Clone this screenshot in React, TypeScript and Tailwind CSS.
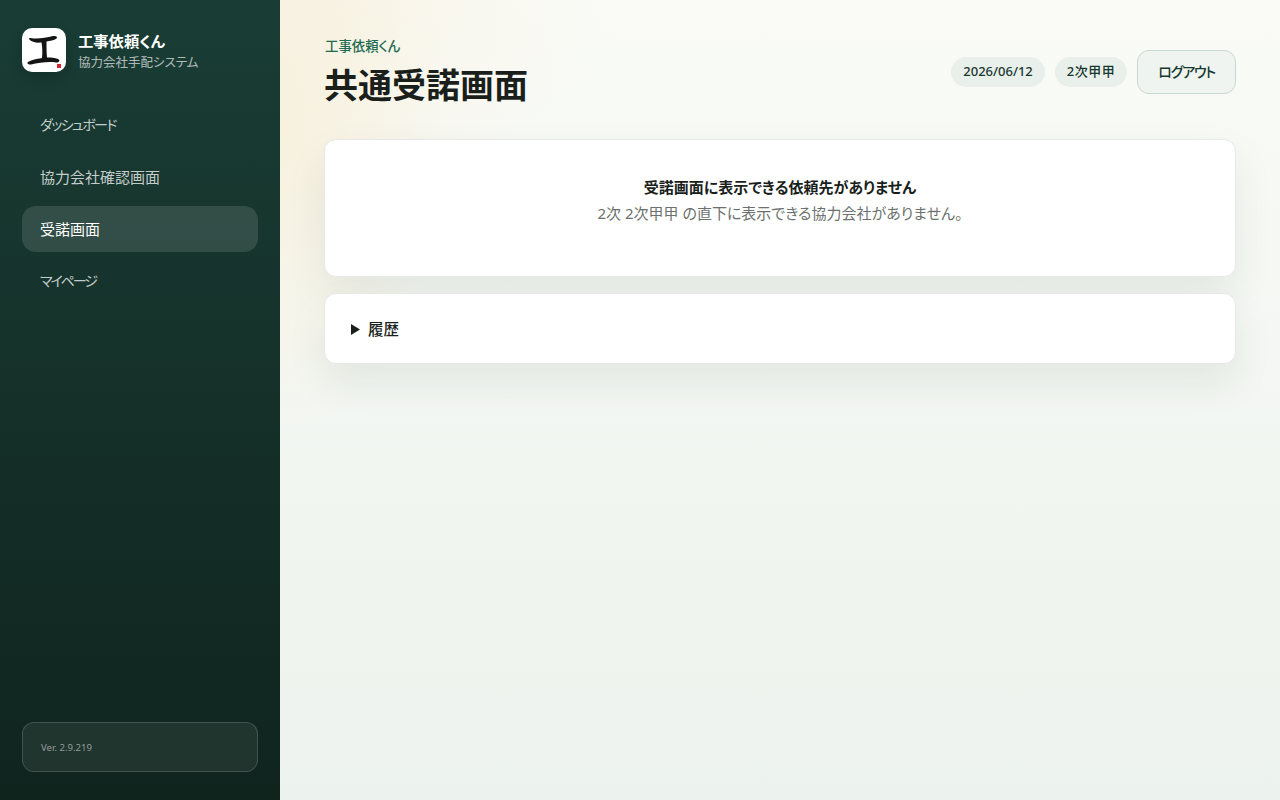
const navItems = [
	{ label: 'ダッシュボード', textClass: 'pb-[1px] text-[14px] tracking-[-1.600px]' },
	{ label: '協力会社確認画面', textClass: 'text-[15px]' },
	{ label: '受諾画面', textClass: 'text-[15px]' },
	{ label: 'マイページ', textClass: 'pb-[1px] text-[14px] tracking-[-2.100px]' },
]

const Logo = () => (
	<div className="flex h-11 w-11 shrink-0 items-center justify-center rounded-[10px] bg-white shadow-[0_6px_14px_rgba(0,0,0,0.18)]">
		<svg width="44" height="44" viewBox="0 0 44 44">
			<path d="M7 11 C7 9.500 9 10 12 10.500 C17 11 25 9.500 31 8 C34 7.500 36 9 34.500 10.500 C32 12.500 28 13 24.500 13.500 C24.500 19 24.500 24 25 29.500 C29 29.500 33 29.500 36 31 C38.500 32.500 37.500 34.500 34 34.500 C27 33.500 17 34.500 9 36.500 C6.500 37 4.500 35.500 6 34 C8 32.500 14 31 20 30 C20.500 25 20.500 20 19.500 14.500 C15 15 9.500 14.500 7 11 Z" fill="#141414" />
			<rect x="35" y="36" width="4" height="4" fill="#d8232f" />
		</svg>
	</div>
)

export default function App() {
	return (
		<div className="flex h-[800px] w-[1280px] overflow-hidden font-['Noto_Sans','Noto_Sans_CJK_JP',sans-serif] text-[#1a1f1c] [font-feature-settings:'palt']">
			<aside className="flex w-[280px] shrink-0 flex-col bg-gradient-to-b from-[#193d35] to-[#10241e] px-[22px] pt-[28px] pb-[28px]">
				<div className="flex items-center gap-[12px]">
					<Logo />
					<div className="pt-[2px]">
						<div className="text-[15.300px] leading-[22px] font-bold text-white">工事依頼くん</div>
						<div className="mt-[1px] text-[12.500px] leading-[19px] text-white/65">協力会社手配システム</div>
					</div>
				</div>
				<nav className="mt-[30px] flex flex-col gap-[6px]">
					{navItems.map((item, index) => (
						<div
							key={item.label}
							className={`flex h-[46px] items-center rounded-[14px] px-[18px] ${item.textClass} ${index === 2 ? 'bg-white/[0.12] text-white' : 'text-white/75'}`}
						>
							{item.label}
						</div>
					))}
				</nav>
				<div className="mt-auto flex h-[50px] items-center rounded-[12px] border border-white/15 bg-white/[0.07] px-[18px] pt-[3px] text-[9.600px] text-white/50">
					Ver. 2.9.219
				</div>
			</aside>
			<main className="flex-1 bg-[radial-gradient(ellipse_170px_300px_at_0%_130px,rgba(247,240,220,0.9),rgba(247,240,220,0)),radial-gradient(ellipse_340px_220px_at_0%_0%,rgba(248,243,228,0.9),rgba(248,243,228,0)),linear-gradient(180deg,#fafbf7_0%,#ecf2ed_100%)] px-[44px] pt-[36px]">
				<header className="flex items-center justify-between">
					<div>
						<div className="pl-[1px] text-[13.400px] leading-[20px] font-medium text-[#1f6b52]">工事依頼くん</div>
						<h1 className="mt-[6px] text-[34px] leading-[46px] font-bold">共通受諾画面</h1>
					</div>
					<div className="flex items-center gap-[10px]">
						<span className="flex h-[30px] items-center rounded-full bg-[#e9efea] px-[12px] text-[13px] font-medium text-[#17382f]">2026/06/12</span>
						<span className="flex h-[30px] items-center rounded-full bg-[#e9efea] px-[12px] text-[13px] font-medium tracking-[0.5px] text-[#17382f]">2次甲甲</span>
						<button className="h-[44px] rounded-[12px] border border-[#c9d8d0] bg-[#eff4f0] px-[20px] pb-[2px] text-[14px] font-medium tracking-[-1.200px] text-[#17382f]">ログアウト</button>
					</div>
				</header>
				<section className="mt-[31px] flex h-[138px] flex-col items-center rounded-[12px] border border-[#e6e9e5] bg-white pt-[36px] shadow-[0_18px_40px_rgba(20,50,40,0.08)]">
					<div className="text-[15px] leading-[22px] font-bold">受諾画面に表示できる依頼先がありません</div>
					<div className="mt-[4px] text-[15px] leading-[22px] text-[#6b716d]">2次 2次甲甲 の直下に表示できる協力会社がありません。</div>
				</section>
				<section className="mt-[16px] flex h-[71px] items-center rounded-[12px] border border-[#e6e9e5] bg-white px-[26px] pt-[2px] shadow-[0_18px_40px_rgba(20,50,40,0.08)]">
					<svg width="9" height="11" viewBox="0 0 9 11" className="mr-[8px]"><path d="M0 0 L9 5.500 L0 11 Z" fill="#1a1f1c" /></svg>
					<span className="text-[15.500px] font-medium">履歴</span>
				</section>
			</main>
		</div>
	)
}
